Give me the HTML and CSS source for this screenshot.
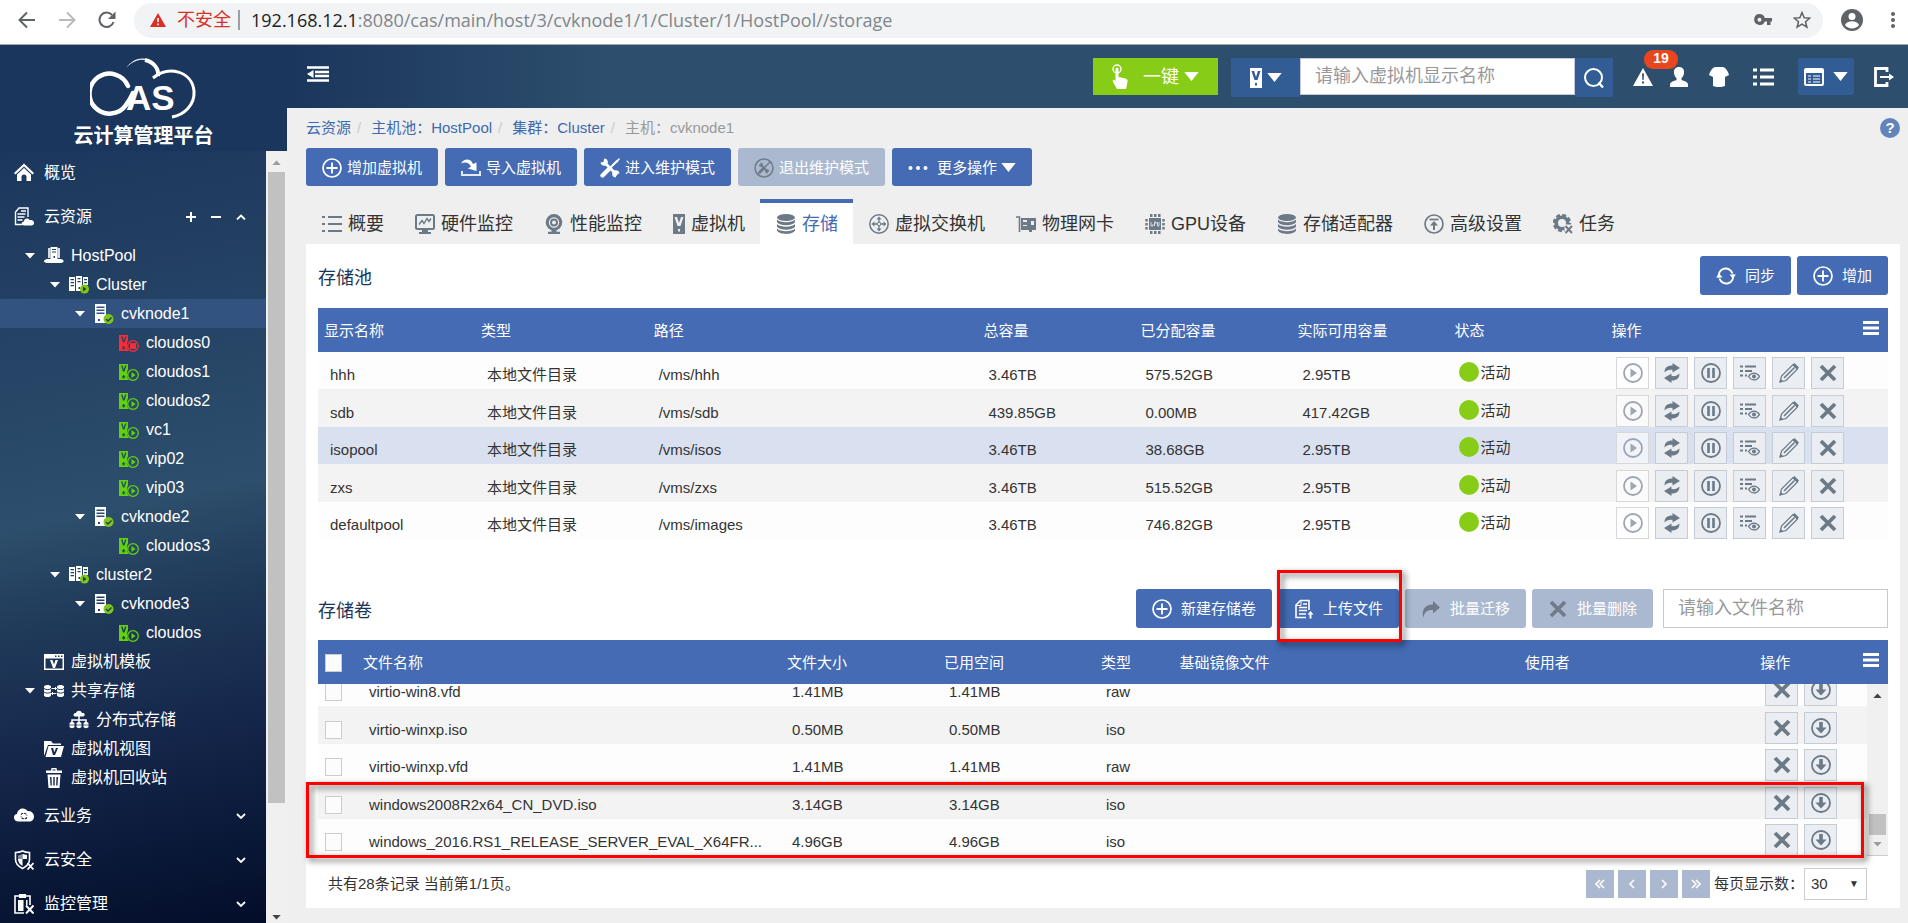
FILE: index.html
```html
<!DOCTYPE html>
<html lang="zh-CN">
<head>
  <meta charset="UTF-8">
  <title>CAS 云计算管理平台</title>
  <link rel="stylesheet" href="styles.css">
</head>
<body>
  <!-- icon sprite -->
  <svg class="sprite" xmlns="http://www.w3.org/2000/svg">
    <symbol id="i-plus" viewBox="0 0 20 20"><circle cx="10" cy="10" r="9" fill="none" stroke="currentColor" stroke-width="1.7"/><path d="M10 4.5v11M4.5 10h11" stroke="currentColor" stroke-width="1.8"/></symbol>
    <symbol id="i-import" viewBox="0 0 20 20"><path d="M1 13v4h18v-4" fill="none" stroke="currentColor" stroke-width="2" opacity=".85"/><path d="M0 5.500C3 0 10 .5 12 6l3.500-1.500V13L7 10.500l3-2C8 4 4 3.500 0 5.500z" fill="currentColor"/></symbol>
    <symbol id="i-tools" viewBox="0 0 20 20"><path d="M4 4l13 13" stroke="currentColor" stroke-width="2.800"/><path d="M17.500 2.500L10 10" stroke="currentColor" stroke-width="2.200"/><path d="M9 11l-6.500 6.500" stroke="currentColor" stroke-width="4.200" stroke-linecap="round"/><path d="M.5 4.500l3-.5.7-3.500c3 .3 4.300 2.500 3.300 5.200L5.700 7.500C3 8.300.8 7 .5 4.500zM19.500 15.500l-3 .5-.7 3.500c-3-.3-4.300-2.500-3.300-5.200l1.800-1.800c2.700-.8 4.900.5 5.200 3z" fill="currentColor"/><path d="M15.500 3.500L19 0l1 1-3 4z" fill="currentColor"/></symbol>
    <symbol id="i-tools-off" viewBox="0 0 20 20"><circle cx="10" cy="10" r="9" fill="none" stroke="currentColor" stroke-width="1.500"/><path d="M6.500 6.500l7.500 7.500" stroke="currentColor" stroke-width="2"/><path d="M9.500 10.500L6 14" stroke="currentColor" stroke-width="3" stroke-linecap="round"/><path d="M4.500 7l1.800-.5.500-2c2 .3 2.500 2 1.500 3.500C7 9 5 8.500 4.500 7zM15.500 13l-1.800.5-.5 2c-2-.3-2.500-2-1.500-3.500 1.300-1 3.300-.5 3.800 1z" fill="currentColor"/><path d="M16.500 3.500L3.500 16.500" stroke="currentColor" stroke-width="1.400"/></symbol>
    <symbol id="i-dots" viewBox="0 0 20 20"><g fill="currentColor"><circle cx="2.500" cy="10" r="2"/><circle cx="10" cy="10" r="2"/><circle cx="17.500" cy="10" r="2"/></g></symbol>
    <symbol id="i-caret" viewBox="0 0 16 10"><path d="M0 0h16L8 10z" fill="currentColor"/></symbol>
    <symbol id="i-list" viewBox="0 0 20 20"><path d="M6 3h14M6 10h14M6 17h14" stroke="currentColor" stroke-width="1.800"/><path d="M0 3h3M0 10h3M0 17h3" stroke="currentColor" stroke-width="1.800"/></symbol>
    <symbol id="i-monitor" viewBox="0 0 20 20"><rect x="1" y="1" width="18" height="14" rx="1.500" fill="none" stroke="currentColor" stroke-width="2"/><path d="M4 10.500l3-4 2 3 3-5 2 3 2-3" fill="none" stroke="currentColor" stroke-width="1.400"/><path d="M7 16h6v2h3v2H4v-2h3z" fill="currentColor"/></symbol>
    <symbol id="i-camera" viewBox="0 0 20 20"><path fill-rule="evenodd" d="M10 0a8.300 8.300 0 1 1 0 16.600A8.300 8.300 0 0 1 10 0zm0 3.300a5.200 5.200 0 1 0 0 10.400 5.200 5.200 0 0 0 0-10.400z" fill="currentColor"/><circle cx="10" cy="8.500" r="3" fill="none" stroke="currentColor" stroke-width="2"/><path d="M7.500 16h5v1.700H16V20H4v-2.300h3.500z" fill="currentColor"/></symbol>
    <symbol id="i-vm" viewBox="0 0 12 20"><path fill-rule="evenodd" d="M0 0h12v20H0zM1.500 3l3 9h3l3-9H8L6 9 4 3zM5 15v2.500h2V15z" fill="currentColor"/></symbol>
    <symbol id="i-disks" viewBox="0 0 20 20"><g fill="currentColor"><ellipse cx="10" cy="3.500" rx="9" ry="3.500"/><path d="M1 5.500C4 9 16 9 19 5.500v2.700c-3 4-15 4-18 0zM1 10c3 3.500 15 3.500 18 0v2.700c-3 4-15 4-18 0zM1 14.500c3 3.500 15 3.500 18 0v2c-2 4.500-16 4.500-18 0z"/></g></symbol>
    <symbol id="i-switch" viewBox="0 0 20 20"><circle cx="10" cy="10" r="9.200" fill="none" stroke="currentColor" stroke-width="1.500"/><path d="M10 2.500l2.500 3h-5zM10 17.500l2.500-3h-5zM2.500 10l3-2.500v5zM17.500 10l-3-2.500v5z" fill="currentColor"/><path d="M10 5v3M10 12v3M5 10h3M12 10h3" stroke="currentColor" stroke-width="1.300"/><circle cx="10" cy="10" r="1.800" fill="none" stroke="currentColor"/></symbol>
    <symbol id="i-nic" viewBox="0 0 20 20"><path d="M0 3h3.500v15" fill="none" stroke="currentColor" stroke-width="1.600"/><path fill-rule="evenodd" d="M5 4h15v12h-4v2h-3v-2H5zM7 6v2h4V6zM15 7v4h3V7zM7 11v1h4v-1z" fill="currentColor"/></symbol>
    <symbol id="i-gpu" viewBox="0 0 20 20"><rect x="4" y="4" width="12" height="12" fill="currentColor"/><path d="M5 1.500h2.500M9 1.500h2.500M13 1.500h2.500M5 18.500h2.500M9 18.500h2.500M13 18.500h2.500" stroke="currentColor" stroke-width="3"/><path d="M1.500 5v2.500M1.500 9v2.500M1.500 13v2.500M18.500 5v2.500M18.500 9v2.500M18.500 13v2.500" stroke="currentColor" stroke-width="2.500"/><path d="M6 8v4h2v-2M9.500 12V8h1.500v2M12.500 8v4H14V8" fill="none" stroke="#efefef" stroke-width=".8"/></symbol>
    <symbol id="i-up" viewBox="0 0 20 20"><circle cx="10" cy="10" r="9" fill="none" stroke="currentColor" stroke-width="1.700"/><path d="M5.500 5.500h9" stroke="currentColor" stroke-width="1.700"/><path d="M10 7l4 4.500h-3V16H9v-4.500H6z" fill="currentColor"/></symbol>
    <symbol id="i-gear" viewBox="0 0 20 20"><circle cx="9" cy="9" r="5.800" fill="none" stroke="currentColor" stroke-width="3.600"/><circle cx="9" cy="9" r="8" fill="none" stroke="currentColor" stroke-width="2.400" stroke-dasharray="4 2.280"/><path d="M11.500 10.500h9v10h-9z" fill="#efefef"/><path d="M12.500 12l6.500 7M19 12l-6.500 7" stroke="currentColor" stroke-width="1.900"/></symbol>
    <symbol id="i-sync" viewBox="0 0 20 20"><path d="M3 11.500a7 7 0 0 1 13.500-4M17 8.500a7 7 0 0 1-13.500 4" fill="none" stroke="currentColor" stroke-width="1.900"/><path d="M13.500 8.500H20L16.700 12.500zM6.500 11.500H0L3.300 7.500z" fill="currentColor"/></symbol>
    <symbol id="i-bars" viewBox="0 0 16 14"><path d="M0 1.500h16M0 7h16M0 12.500h16" stroke="currentColor" stroke-width="3"/></symbol>
    <symbol id="i-play" viewBox="0 0 20 20"><circle cx="10" cy="10" r="9" fill="none" stroke="currentColor" stroke-width="1.800"/><path d="M7.500 5.500L14 10l-6.500 4.500z" fill="currentColor"/></symbol>
    <symbol id="i-refresh" viewBox="0 0 20 20"><path d="M2.500 9.500C2.500 5 5 2.500 10.500 2.500V0L18 5l-7.500 4.500V7C7 6.500 4.500 7.500 2.500 9.500zM17.500 10.500c0 4.500-2.500 7-8 7V20L2 15l7.500-4.500V13c3.500.5 6-.5 8-2.500z" fill="currentColor"/></symbol>
    <symbol id="i-pause" viewBox="0 0 20 20"><circle cx="10" cy="10" r="9" fill="none" stroke="currentColor" stroke-width="1.800"/><path d="M7.500 5v10M12.500 5v10" stroke="currentColor" stroke-width="2.600"/></symbol>
    <symbol id="i-view" viewBox="0 0 20 20"><path d="M0 3.500h3M5 3.500h11M0 8h3M5 8h7M0 12.500h3M5 12.500h2" stroke="currentColor" stroke-width="2"/><path d="M8.500 13.500c3-4.500 8-4.500 11 0-3 4.500-8 4.500-11 0z" fill="none" stroke="currentColor" stroke-width="1.300"/><circle cx="14" cy="13.500" r="2" fill="currentColor"/></symbol>
    <symbol id="i-edit" viewBox="0 0 20 20"><path d="M1 19l1.500-6L14 1.500 18.500 6 7 17.500z" fill="none" stroke="currentColor" stroke-width="1.200"/><path d="M5 15L15.500 4.500" stroke="currentColor" stroke-width="1.600"/><path d="M13.500 2L15.500 0 20 4.500l-2 2zM.5 19.500l1-4 3 3z" fill="currentColor"/></symbol>
    <symbol id="i-x" viewBox="0 0 20 20"><path d="M3 3l14 14M17 3L3 17" stroke="currentColor" stroke-width="3.800"/></symbol>
    <symbol id="i-down" viewBox="0 0 20 20"><circle cx="10" cy="10" r="9" fill="none" stroke="currentColor" stroke-width="1.800"/><path d="M8.200 4h3.600v5.500H15.500L10 15.500 4.500 9.500h3.700z" fill="currentColor"/></symbol>
    <symbol id="i-upload" viewBox="0 0 20 20"><path d="M12 18.500H2V6l4.500-4.500H15V11" fill="none" stroke="currentColor" stroke-width="1.600"/><path d="M2 6.500h5V1.500" fill="none" stroke="currentColor"/><path d="M9 5h4M5 8.500h8M5 11.500h8M5 15h7" stroke="currentColor" stroke-width="1.500"/><path d="M15.500 19.500v-4h-2l3-3.500 3 3.500h-2v4z" fill="currentColor"/></symbol>
    <symbol id="i-forward" viewBox="0 0 20 20"><path d="M12 2l7 6.500-7 6V11C7 10.500 3 12.500 2.500 19 0 11 4 5.500 12 5.500z" fill="currentColor"/></symbol>
    <symbol id="i-home" viewBox="0 0 20 20"><path d="M10 .5L20 10l-1.500 1.500L10 3.500l-8.500 8L0 10z" fill="currentColor"/><path d="M3 11.500l7-6.500 7 6.500V18h-4.500v-4a2.500 2.500 0 0 0-5 0v4H3z" fill="currentColor"/></symbol>
    <symbol id="i-doccloud" viewBox="0 0 20 20"><path d="M8 17.500H1.500V5L5 1h9v9" fill="none" stroke="currentColor" stroke-width="1.400"/><path d="M7 4h5M3.500 7h8M3.500 10h7M3.500 13h5" stroke="currentColor" stroke-width="1.500"/><path d="M10 18.500c-3 0-3-4 0-4 0-3 4-4 5.500-1.500 2.500-.5 4.500.5 4.500 3 0 1.500-1 2.500-2.500 2.500z" fill="currentColor"/></symbol>
    <symbol id="i-pool" viewBox="0 0 20 20"><path d="M4 2h2.500v10H4zM13.500 2H16v10h-2.500z" fill="currentColor" opacity=".8"/><path fill-rule="evenodd" d="M6.500 1h7v13h-7zM8 3v1h4V3zM8 5.500v1h4v-1zM9.500 10v2h1.500v-2z" fill="currentColor"/><path d="M3 13h14c4 1 3 3.500 0 4H3c-4-.5-4-3 0-4z" fill="currentColor"/></symbol>
    <symbol id="i-cluster" viewBox="0 0 20 20"><path fill-rule="evenodd" d="M0 2h6v14H0zM1.500 4v1.200H5V4zM1.500 7v1.200H5V7zM1.500 10v1.200H5V10zM7 1h6v15H7zM8.500 3v1.200h3V3zM8.500 6v1.200h3V6zM9.500 12v2H11v-2zM14 2h5v8h-5zM15 4v1.200h3V4zM15 7v1.200h3V7z" fill="currentColor"/><circle cx="15.500" cy="14" r="4.500" fill="#7fc617"/><path d="M14 11.500l3.500 2.500-3.500 2.500z" fill="#1f3d5c"/></symbol>
    <symbol id="i-host" viewBox="0 0 20 20"><path fill-rule="evenodd" d="M1 0h11v19H1zM2.500 2.500V4h8V2.500zM2.500 5.500V7h8V5.500zM2.500 8.500V10h8V8.500zM4 15v2h2v-2z" fill="currentColor"/><circle cx="14.500" cy="15" r="5" fill="#7fc617"/><path d="M12 15l2 2 3.500-3.500" fill="none" stroke="#1f3d5c" stroke-width="1.400"/></symbol>
    <symbol id="i-vmrun" viewBox="0 0 20 20"><path fill-rule="evenodd" d="M0 2h9v5.500C7.500 9 7.500 16 10 18H0zM2 3.500l2 6h1.500l2-6H6L4.800 7.500 3.500 3.500zM4 13v1.200h-1v1.200h1v1.200h1.300v-1.200h1v-1.200h-1V13z" fill="currentColor"/><circle cx="14" cy="13" r="5.300" fill="none" stroke="currentColor" stroke-width="1.300"/><path d="M12.500 10l4 3-4 3z" fill="currentColor"/></symbol>
    <symbol id="i-vmstop" viewBox="0 0 20 20"><path fill-rule="evenodd" d="M0 2h9v5.500C7.500 9 7.500 16 10 18H0zM2 3.500l2 6h1.500l2-6H6L4.800 7.500 3.500 3.500zM4 13v1.200h-1v1.200h1v1.200h1.300v-1.200h1v-1.200h-1V13z" fill="currentColor"/><circle cx="14" cy="13" r="5.300" fill="none" stroke="currentColor" stroke-width="1.300"/><path d="M11 10h6v6h-6z" fill="currentColor"/></symbol>
    <symbol id="i-template" viewBox="0 0 20 20"><path fill-rule="evenodd" d="M0 2h20v16H0zM1.500 6.500v10h17v-10zM11 3.500V5h1.500V3.500zM14 3.500V5h1.500V3.500zM17 3.500V5h1.500V3.500z" fill="currentColor"/><path d="M6 8h2.500l1.500 4.500L11.500 8H14l-3 8H9z" fill="currentColor"/></symbol>
    <symbol id="i-share" viewBox="0 0 20 20"><path d="M0 5.500c1-2 6-2 7 0v9c-1 2-6 2-7 0zM13 5.500c1-2 6-2 7 0v9c-1 2-6 2-7 0z" fill="currentColor"/><path d="M0 7.500c2 1.500 5 1.500 7 0M0 11c2 1.500 5 1.500 7 0M13 7.500c2 1.500 5 1.500 7 0M13 11c2 1.500 5 1.500 7 0" fill="none" stroke="#1b3150"/><path d="M7.500 7.500h5M7.500 12.500h5M11 6l1.500 1.500L11 9M9 11l-1.500 1.500L9 14" fill="none" stroke="currentColor"/></symbol>
    <symbol id="i-dist" viewBox="0 0 20 20"><path d="M6 6.500c-3-1-1-4 1-3.500 1-3 5-3 6 0 3-.5 4 2.500 1 3.500z" fill="currentColor"/><path d="M10 6v6M3 12.500V10h14v2.500" fill="none" stroke="currentColor" stroke-width="1.500"/><path d="M.5 13c1-1.500 4-1.500 5 0v4c-1 1.500-4 1.500-5 0zM7.500 13c1-1.500 4-1.500 5 0v4c-1 1.500-4 1.500-5 0zM14.500 13c1-1.500 4-1.500 5 0v4c-1 1.500-4 1.500-5 0z" fill="currentColor"/><path d="M0 15h20" stroke="#1b3150" stroke-width=".7"/></symbol>
    <symbol id="i-folder" viewBox="0 0 20 20"><path d="M0 17V2h7l2 2.500h8V6H4z" fill="currentColor"/><path fill-rule="evenodd" d="M4.500 7H20l-3 11H1.500zM7 9l2 7h2l3-7h-2l-1.800 4.500L9.200 9z" fill="currentColor"/></symbol>
    <symbol id="i-trash" viewBox="0 0 20 20"><path fill-rule="evenodd" d="M2 2.500h5L7.500 0h5l.5 2.500h5V5H2zM8.500 1.500v1h3v-1zM3.500 6.500h13L15.500 20h-11zM6 9l.5 8.500h1.300L7.500 9zM9.300 9v8.500h1.400V9zM12.500 9l-.3 8.500h1.300L14 9z" fill="currentColor"/></symbol>
    <symbol id="i-cloudsvc" viewBox="0 0 20 20"><path d="M4.500 15.500C-1 15.500-1.500 8.500 3 8 3.500 2 11 .5 13.500 5 18 4.500 20 8 20 10.500c0 3-2 5-5 5z" fill="currentColor"/><path d="M7 8.500a3.500 3.500 0 0 1 6 1M13 11.500a3.500 3.500 0 0 1-6-1" fill="none" stroke="#12223f" stroke-width="1.200" stroke-dasharray="2.500 .8"/></symbol>
    <symbol id="i-shield" viewBox="0 0 20 20"><path d="M8.500 1c2 1 5 1.500 7 1.500v7c0 4-3 7-7 9-4-2-7-5-7-9v-7c2 0 5-.5 7-1.500z" fill="none" stroke="currentColor" stroke-width="1.600"/><path d="M8.500 4v5H13V5zM8.500 9v7C5.500 14 4 12 4 9z" fill="currentColor"/><path d="M4 5.500l4.500-1.500v5H4z" fill="currentColor" opacity=".5"/><path d="M13.500 13l6 6.500M19.500 13l-6 6.500" stroke="currentColor" stroke-width="1.800"/></symbol>
    <symbol id="i-clip" viewBox="0 0 20 20"><path d="M10 19H1V2h15v9" fill="none" stroke="currentColor" stroke-width="1.600"/><path d="M5 0h7v4H5zM4 6h5.500v11H4zM12 6h1.500v5H12z" fill="currentColor"/><path d="M12 11.500l7.500 8M19.500 11.500l-7.500 8" stroke="currentColor" stroke-width="2"/></symbol>
    <symbol id="i-tri" viewBox="0 0 10 6"><path d="M0 0h10L5 5.500z" fill="currentColor"/></symbol>
    <symbol id="i-chev" viewBox="0 0 10 6"><path d="M1 1l4 4 4-4" fill="none" stroke="currentColor" stroke-width="1.800"/></symbol>
    <symbol id="i-chevup" viewBox="0 0 10 6"><path d="M1 5.500l4-4 4 4" fill="none" stroke="currentColor" stroke-width="1.800"/></symbol>
  </svg>

  <!-- browser address bar -->
  <div class="browser">
    <div class="nav-buttons">
      <svg width="20" height="20" viewBox="0 0 20 20"><path d="M18 10H3M10 2.500L2.500 10l7.500 7.500" fill="none" stroke="#5f6368" stroke-width="2"/></svg>
      <svg width="20" height="20" viewBox="0 0 20 20"><path d="M2 10h15M10 2.500l7.500 7.500-7.500 7.500" fill="none" stroke="#bbb" stroke-width="2"/></svg>
      <svg width="20" height="20" viewBox="0 0 20 20"><path d="M16.500 12A7.200 7.200 0 1 1 15 5" fill="none" stroke="#5f6368" stroke-width="2"/><path d="M18.500 1.500v7.500H11z" fill="#5f6368"/></svg>
    </div>
    <div class="omnibox">
      <svg width="16" height="14" viewBox="0 0 16 14"><path d="M8 0l8 14H0z" fill="#d93025"/><path d="M8 5v4M8 10.500v1.800" stroke="#fff" stroke-width="1.600"/></svg>
      <span class="insecure">不安全</span>
      <span class="url"><b>192.168.12.1</b>:8080/cas/main/host/3/cvknode1/1/Cluster/1/HostPool//storage</span>
      <svg width="18" height="12" viewBox="0 0 18 12"><path fill-rule="evenodd" d="M5.500 0a5.500 5.500 0 0 1 5.300 4H18v3.500h-1.500V11H13V7.500h-2.200A5.500 5.500 0 1 1 5.500 0zm0 3.700a2 2 0 1 0 0 4 2 2 0 0 0 0-4z" fill="#5f6368"/></svg>
      <svg width="18" height="18" viewBox="0 0 18 18"><path d="M9 1.500l2.200 5.200 5.600.4-4.300 3.600 1.400 5.500L9 13.200l-4.900 3 1.400-5.500L1.200 7.100l5.600-.4z" fill="none" stroke="#5f6368" stroke-width="1.500"/></svg>
    </div>
    <svg width="22" height="22" viewBox="0 0 22 22"><circle cx="11" cy="11" r="11" fill="#5f6368"/><circle cx="11" cy="7.500" r="3.500" fill="#fff"/><path d="M4 16c2-5 12-5 14 0-3 4.500-11 4.500-14 0z" fill="#fff"/></svg>
    <svg width="4" height="16" viewBox="0 0 4 16"><g fill="#5f6368"><circle cx="2" cy="2" r="2"/><circle cx="2" cy="8" r="2"/><circle cx="2" cy="14" r="2"/></g></svg>
  </div>

  <div class="app">
    <aside class="side">
      <div class="logo">
        <svg width="108" height="62" viewBox="0 0 108 62" fill="none" stroke="#fff">
          <path d="M38 29A20 20 0 1 0 36 48q4-5 7-12" stroke-width="4.500" stroke-linecap="round"/>
          <path d="M36 11C48-5 66 0 72 20c-4-14-20-26-36-9z" fill="#fff" stroke="none"/>
          <path d="M55 3c9 2 14 9 13 16" stroke-width="4"/>
          <path d="M63 21C78 8 102 14 104 34c1 14-10 24-22 26" stroke-width="3"/>
          <text x="36" y="53" class="logo-as">AS</text>
        </svg>
        <span>云计算管理平台</span>
      </div>
      <div class="side-body">
        <nav class="menu">
          <a href="#" class="section"><svg class="icon"><use href="#i-home"/></svg>概览</a>
          <a href="#" class="section"><svg class="icon"><use href="#i-doccloud"/></svg>云资源
            <span class="tools"><i class="pm plus"></i><i class="pm"></i><svg class="tri"><use href="#i-chevup"/></svg></span>
          </a>
          <ul class="tree">
            <li class="l1"><a href="#"><svg class="tri"><use href="#i-tri"/></svg><svg class="icon"><use href="#i-pool"/></svg>HostPool</a></li>
            <li class="l2"><a href="#"><svg class="tri"><use href="#i-tri"/></svg><svg class="icon"><use href="#i-cluster"/></svg>Cluster</a></li>
            <li class="l3 current"><a href="#"><svg class="tri"><use href="#i-tri"/></svg><svg class="icon"><use href="#i-host"/></svg>cvknode1</a></li>
            <li class="l4"><a href="#"><svg class="icon stopped"><use href="#i-vmstop"/></svg>cloudos0</a></li>
            <li class="l4"><a href="#"><svg class="icon running"><use href="#i-vmrun"/></svg>cloudos1</a></li>
            <li class="l4"><a href="#"><svg class="icon running"><use href="#i-vmrun"/></svg>cloudos2</a></li>
            <li class="l4"><a href="#"><svg class="icon running"><use href="#i-vmrun"/></svg>vc1</a></li>
            <li class="l4"><a href="#"><svg class="icon running"><use href="#i-vmrun"/></svg>vip02</a></li>
            <li class="l4"><a href="#"><svg class="icon running"><use href="#i-vmrun"/></svg>vip03</a></li>
            <li class="l3"><a href="#"><svg class="tri"><use href="#i-tri"/></svg><svg class="icon"><use href="#i-host"/></svg>cvknode2</a></li>
            <li class="l4"><a href="#"><svg class="icon running"><use href="#i-vmrun"/></svg>cloudos3</a></li>
            <li class="l2"><a href="#"><svg class="tri"><use href="#i-tri"/></svg><svg class="icon"><use href="#i-cluster"/></svg>cluster2</a></li>
            <li class="l3"><a href="#"><svg class="tri"><use href="#i-tri"/></svg><svg class="icon"><use href="#i-host"/></svg>cvknode3</a></li>
            <li class="l4"><a href="#"><svg class="icon running"><use href="#i-vmrun"/></svg>cloudos</a></li>
            <li class="l1 leaf"><a href="#"><svg class="icon"><use href="#i-template"/></svg>虚拟机模板</a></li>
            <li class="l1"><a href="#"><svg class="tri"><use href="#i-tri"/></svg><svg class="icon"><use href="#i-share"/></svg>共享存储</a></li>
            <li class="l2 leaf"><a href="#"><svg class="icon"><use href="#i-dist"/></svg>分布式存储</a></li>
            <li class="l1 leaf"><a href="#"><svg class="icon"><use href="#i-folder"/></svg>虚拟机视图</a></li>
            <li class="l1 leaf"><a href="#"><svg class="icon"><use href="#i-trash"/></svg>虚拟机回收站</a></li>
          </ul>
          <a href="#" class="section"><svg class="icon"><use href="#i-cloudsvc"/></svg>云业务<span class="tools"><svg class="tri"><use href="#i-chev"/></svg></span></a>
          <a href="#" class="section"><svg class="icon"><use href="#i-shield"/></svg>云安全<span class="tools"><svg class="tri"><use href="#i-chev"/></svg></span></a>
          <a href="#" class="section"><svg class="icon"><use href="#i-clip"/></svg>监控管理<span class="tools"><svg class="tri"><use href="#i-chev"/></svg></span></a>
        </nav>
        <div class="scrollbar side-scroll">
          <svg class="arrow up dim"><use href="#i-tri"/></svg>
          <div class="thumb"></div>
          <svg class="arrow"><use href="#i-tri"/></svg>
        </div>
      </div>
    </aside>

    <div class="page">
      <header class="topbar">
        <button type="button" class="collapse" aria-label="收起菜单">
          <svg width="22" height="16" viewBox="0 0 22 16"><path d="M0 1.500h22M8 6h14M8 10h14M0 14.500h22" stroke="#fff" stroke-width="2.600"/><path d="M6.500 4v8L0 8z" fill="#fff"/></svg>
        </button>
        <button type="button" class="onekey">
          <svg width="16" height="26" viewBox="0 0 16 26"><circle cx="5" cy="5" r="4" fill="none" stroke="#fff" stroke-width="1.400"/><path d="M3.500 5a1.500 1.500 0 0 1 3 0v8l7 1.500c1.500.5 2.500 1.500 2 3.500L14 25H5l-4-7c-1-2.500 1-3 2.500-1z" fill="#fff"/></svg>
          一键<svg class="caret"><use href="#i-caret"/></svg>
        </button>
        <div class="search">
          <button type="button" class="kind" aria-label="类型"><svg width="12" height="20"><use href="#i-vm"/></svg><svg class="caret"><use href="#i-caret"/></svg></button>
          <input type="text" placeholder="请输入虚拟机显示名称" aria-label="虚拟机显示名称">
          <button type="button" class="go" aria-label="搜索"><svg width="20" height="20" viewBox="0 0 20 20"><circle cx="9.500" cy="9.500" r="8.500" fill="none" stroke="#fff" stroke-width="2"/><path d="M14.500 14.500l4.500 5" stroke="#fff" stroke-width="2.400"/></svg></button>
        </div>
        <div class="quick">
          <a href="#" class="alarm" aria-label="告警">
            <svg width="20" height="18" viewBox="0 0 20 18"><path fill-rule="evenodd" d="M10 0l10 18H0zM9 5.500l.4 6.500h1.200l.4-6.500zM9 13.500v2h2v-2z" fill="#fff"/></svg>
            <span class="badge">19</span>
          </a>
          <a href="#" aria-label="用户"><svg width="20" height="20" viewBox="0 0 20 20"><path d="M10 0c3.500 0 5.500 2.500 5 6-.3 2.500-1.200 4-2.500 5v2c3 1 6.500 2 6.500 4.500V20H1v-2.500C1 15 4.500 14 7.500 13v-2C6.200 10 5.300 8.500 5 6c-.5-3.500 1.500-6 5-6z" fill="#fff"/></svg></a>
          <a href="#" aria-label="皮肤"><svg width="20" height="20" viewBox="0 0 20 20"><path d="M6 0h8c3 1 5 4 6 8l-4 2v9c-3 1.500-9 1.500-12 0v-9L0 8c1-4 3-7 6-8z" fill="#fff"/></svg></a>
          <a href="#" aria-label="列表"><svg width="21" height="18" viewBox="0 0 21 18"><path d="M0 2h4M7 2h14M0 9h4M7 9h14M0 16h4M7 16h14" stroke="#fff" stroke-width="3"/></svg></a>
          <button type="button" class="panel-menu" aria-label="面板">
            <svg width="20" height="18" viewBox="0 0 20 18"><rect x="1" y="1" width="18" height="16" rx="1" fill="none" stroke="#fff" stroke-width="2"/><path d="M0 2h20v3H0z" fill="#fff"/><path d="M4 8h3M9 8h7M4 11h3M9 11h7M4 14h3M9 14h7" stroke="#fff" stroke-width="1.200"/></svg>
            <svg class="caret"><use href="#i-caret"/></svg>
          </button>
          <a href="#" aria-label="退出"><svg width="20" height="20" viewBox="0 0 20 20"><path d="M13 5V1.500H1.500v17H13V15" fill="none" stroke="#fff" stroke-width="2.800"/><path d="M6 9h9V6.500l5 3.500-5 3.500V11H6z" fill="#fff"/></svg></a>
        </div>
      </header>

      <main class="content">
        <div class="crumbs">
          <ol>
            <li><a href="#">云资源</a></li>
            <li><a href="#">主机池：HostPool</a></li>
            <li><a href="#">集群：Cluster</a></li>
            <li>主机：cvknode1</li>
          </ol>
          <a href="#" class="help">?</a>
        </div>

        <div class="toolbar">
          <button type="button" class="btn"><svg class="icon"><use href="#i-plus"/></svg>增加虚拟机</button>
          <button type="button" class="btn"><svg class="icon"><use href="#i-import"/></svg>导入虚拟机</button>
          <button type="button" class="btn"><svg class="icon"><use href="#i-tools"/></svg>进入维护模式</button>
          <button type="button" class="btn" disabled><svg class="icon"><use href="#i-tools-off"/></svg>退出维护模式</button>
          <button type="button" class="btn more"><svg class="icon"><use href="#i-dots"/></svg><span>更多操作<svg class="caret"><use href="#i-caret"/></svg></span></button>
        </div>

        <nav class="tabs">
          <a href="#"><svg class="icon"><use href="#i-list"/></svg>概要</a>
          <a href="#"><svg class="icon"><use href="#i-monitor"/></svg>硬件监控</a>
          <a href="#"><svg class="icon"><use href="#i-camera"/></svg>性能监控</a>
          <a href="#"><svg class="icon slim"><use href="#i-vm"/></svg>虚拟机</a>
          <a href="#" class="active"><svg class="icon"><use href="#i-disks"/></svg>存储</a>
          <a href="#"><svg class="icon"><use href="#i-switch"/></svg>虚拟交换机</a>
          <a href="#"><svg class="icon"><use href="#i-nic"/></svg>物理网卡</a>
          <a href="#"><svg class="icon"><use href="#i-gpu"/></svg>GPU设备</a>
          <a href="#"><svg class="icon"><use href="#i-disks"/></svg>存储适配器</a>
          <a href="#"><svg class="icon"><use href="#i-up"/></svg>高级设置</a>
          <a href="#"><svg class="icon"><use href="#i-gear"/></svg>任务</a>
        </nav>

        <div class="panel">
          <div class="head">
            <h2>存储池</h2>
            <button type="button" class="btn wide"><svg class="icon"><use href="#i-sync"/></svg>同步</button>
            <button type="button" class="btn wide"><svg class="icon"><use href="#i-plus"/></svg>增加</button>
          </div>
          <table class="grid pools">
            <colgroup><col class="c10"><col class="c11"><col class="c21"><col class="c10"><col class="c10"><col class="c10"><col class="c10"><col></colgroup>
            <thead>
              <tr><th>显示名称</th><th>类型</th><th>路径</th><th>总容量</th><th>已分配容量</th><th>实际可用容量</th><th>状态</th><th>操作<svg class="bars"><use href="#i-bars"/></svg></th></tr>
            </thead>
            <tbody>
              <tr>
                <td>hhh</td><td>本地文件目录</td><td>/vms/hhh</td><td>3.46TB</td><td>575.52GB</td><td>2.95TB</td><td class="state">活动</td>
                <td class="ops"><div><button type="button" disabled><svg class="icon"><use href="#i-play"/></svg></button><button type="button"><svg class="icon"><use href="#i-refresh"/></svg></button><button type="button"><svg class="icon"><use href="#i-pause"/></svg></button><button type="button"><svg class="icon"><use href="#i-view"/></svg></button><button type="button"><svg class="icon"><use href="#i-edit"/></svg></button><button type="button"><svg class="icon"><use href="#i-x"/></svg></button></div></td>
              </tr>
              <tr>
                <td>sdb</td><td>本地文件目录</td><td>/vms/sdb</td><td>439.85GB</td><td>0.00MB</td><td>417.42GB</td><td class="state">活动</td>
                <td class="ops"><div><button type="button" disabled><svg class="icon"><use href="#i-play"/></svg></button><button type="button"><svg class="icon"><use href="#i-refresh"/></svg></button><button type="button"><svg class="icon"><use href="#i-pause"/></svg></button><button type="button"><svg class="icon"><use href="#i-view"/></svg></button><button type="button"><svg class="icon"><use href="#i-edit"/></svg></button><button type="button"><svg class="icon"><use href="#i-x"/></svg></button></div></td>
              </tr>
              <tr class="selected">
                <td>isopool</td><td>本地文件目录</td><td>/vms/isos</td><td>3.46TB</td><td>38.68GB</td><td>2.95TB</td><td class="state">活动</td>
                <td class="ops"><div><button type="button" disabled><svg class="icon"><use href="#i-play"/></svg></button><button type="button"><svg class="icon"><use href="#i-refresh"/></svg></button><button type="button"><svg class="icon"><use href="#i-pause"/></svg></button><button type="button"><svg class="icon"><use href="#i-view"/></svg></button><button type="button"><svg class="icon"><use href="#i-edit"/></svg></button><button type="button"><svg class="icon"><use href="#i-x"/></svg></button></div></td>
              </tr>
              <tr>
                <td>zxs</td><td>本地文件目录</td><td>/vms/zxs</td><td>3.46TB</td><td>515.52GB</td><td>2.95TB</td><td class="state">活动</td>
                <td class="ops"><div><button type="button" disabled><svg class="icon"><use href="#i-play"/></svg></button><button type="button"><svg class="icon"><use href="#i-refresh"/></svg></button><button type="button"><svg class="icon"><use href="#i-pause"/></svg></button><button type="button"><svg class="icon"><use href="#i-view"/></svg></button><button type="button"><svg class="icon"><use href="#i-edit"/></svg></button><button type="button"><svg class="icon"><use href="#i-x"/></svg></button></div></td>
              </tr>
              <tr>
                <td>defaultpool</td><td>本地文件目录</td><td>/vms/images</td><td>3.46TB</td><td>746.82GB</td><td>2.95TB</td><td class="state">活动</td>
                <td class="ops"><div><button type="button" disabled><svg class="icon"><use href="#i-play"/></svg></button><button type="button"><svg class="icon"><use href="#i-refresh"/></svg></button><button type="button"><svg class="icon"><use href="#i-pause"/></svg></button><button type="button"><svg class="icon"><use href="#i-view"/></svg></button><button type="button"><svg class="icon"><use href="#i-edit"/></svg></button><button type="button"><svg class="icon"><use href="#i-x"/></svg></button></div></td>
              </tr>
            </tbody>
          </table>

          <div class="head volumes-head">
            <h2>存储卷</h2>
            <button type="button" class="btn wide"><svg class="icon"><use href="#i-plus"/></svg>新建存储卷</button>
            <span class="marked"><button type="button" class="btn wide"><svg class="icon"><use href="#i-upload"/></svg>上传文件</button></span>
            <button type="button" class="btn wide" disabled><svg class="icon"><use href="#i-forward"/></svg>批量迁移</button>
            <button type="button" class="btn wide" disabled><svg class="icon"><use href="#i-x"/></svg>批量删除</button>
            <input type="text" placeholder="请输入文件名称" aria-label="文件名称">
          </div>
          <table class="grid files">
            <colgroup><col class="cbox"><col class="c27"><col class="c10"><col class="c10"><col class="c5"><col class="c22"><col class="c15"><col></colgroup>
            <thead>
              <tr><th><input type="checkbox" aria-label="全选"></th><th>文件名称</th><th>文件大小</th><th>已用空间</th><th>类型</th><th>基础镜像文件</th><th>使用者</th><th>操作<svg class="bars"><use href="#i-bars"/></svg></th></tr>
            </thead>
          </table>
          <div class="files-area">
            <div class="files-body">
              <table class="grid files">
                <colgroup><col class="cbox"><col class="c27"><col class="c10"><col class="c10"><col class="c5"><col class="c22"><col class="c15"><col></colgroup>
                <tbody>
                  <tr><td><input type="checkbox" aria-label="virtio-win8.vfd"></td><td>virtio-win8.vfd</td><td>1.41MB</td><td>1.41MB</td><td>raw</td><td></td><td></td><td class="ops"><div><button type="button"><svg class="icon"><use href="#i-x"/></svg></button><button type="button"><svg class="icon"><use href="#i-down"/></svg></button></div></td></tr>
                  <tr><td><input type="checkbox" aria-label="virtio-winxp.iso"></td><td>virtio-winxp.iso</td><td>0.50MB</td><td>0.50MB</td><td>iso</td><td></td><td></td><td class="ops"><div><button type="button"><svg class="icon"><use href="#i-x"/></svg></button><button type="button"><svg class="icon"><use href="#i-down"/></svg></button></div></td></tr>
                  <tr><td><input type="checkbox" aria-label="virtio-winxp.vfd"></td><td>virtio-winxp.vfd</td><td>1.41MB</td><td>1.41MB</td><td>raw</td><td></td><td></td><td class="ops"><div><button type="button"><svg class="icon"><use href="#i-x"/></svg></button><button type="button"><svg class="icon"><use href="#i-down"/></svg></button></div></td></tr>
                  <tr><td><input type="checkbox" aria-label="windows2008R2x64_CN_DVD.iso"></td><td>windows2008R2x64_CN_DVD.iso</td><td>3.14GB</td><td>3.14GB</td><td>iso</td><td></td><td></td><td class="ops"><div><button type="button"><svg class="icon"><use href="#i-x"/></svg></button><button type="button"><svg class="icon"><use href="#i-down"/></svg></button></div></td></tr>
                  <tr><td><input type="checkbox" aria-label="windows_2016"></td><td>windows_2016.RS1_RELEASE_SERVER_EVAL_X64FR...</td><td>4.96GB</td><td>4.96GB</td><td>iso</td><td></td><td></td><td class="ops"><div><button type="button"><svg class="icon"><use href="#i-x"/></svg></button><button type="button"><svg class="icon"><use href="#i-down"/></svg></button></div></td></tr>
                </tbody>
              </table>
            </div>
            <div class="scrollbar files-scroll">
              <svg class="arrow up"><use href="#i-tri"/></svg>
              <div class="thumb"></div>
              <svg class="arrow dim"><use href="#i-tri"/></svg>
            </div>
            <div class="mark"></div>
          </div>

          <div class="pager">
            <span class="total">共有28条记录 当前第1/1页。</span>
            <button type="button" aria-label="首页"><svg width="10" height="10" viewBox="0 0 10 10"><path d="M5 1L1 5l4 4M9 1L5 5l4 4" fill="none" stroke="#fff" stroke-width="1.600"/></svg></button>
            <button type="button" aria-label="上一页"><svg width="10" height="10" viewBox="0 0 10 10"><path d="M7 1L3 5l4 4" fill="none" stroke="#fff" stroke-width="1.600"/></svg></button>
            <button type="button" aria-label="下一页"><svg width="10" height="10" viewBox="0 0 10 10"><path d="M3 1l4 4-4 4" fill="none" stroke="#fff" stroke-width="1.600"/></svg></button>
            <button type="button" aria-label="末页"><svg width="10" height="10" viewBox="0 0 10 10"><path d="M1 1l4 4-4 4M5 1l4 4-4 4" fill="none" stroke="#fff" stroke-width="1.600"/></svg></button>
            <div class="size">
              <label for="page-size">每页显示数：</label>
              <span class="select"><select id="page-size"><option>30</option><option>50</option><option>100</option></select></span>
            </div>
          </div>
        </div>
      </main>
    </div>
  </div>
</body>
</html>
```
FILE: styles.css
```css
* {
  box-sizing: border-box;
}
body {
  margin: 0;
  height: 100vh;
  display: flex;
  flex-direction: column;
  overflow: hidden;
  background: #efefef;
  color: #333;
  font: 15px/20px "Liberation Sans", "Noto Sans CJK SC", sans-serif;
}
a {
  color: inherit;
  text-decoration: none;
}
button, input, select {
  font: inherit;
  margin: 0;
}
button {
  border: 0;
  padding: 0;
  cursor: pointer;
}
svg {
  display: block;
  flex: none;
}
.sprite {
  position: absolute;
  width: 0;
  height: 0;
}
.icon {
  width: 20px;
  height: 20px;
}
.caret {
  width: 15px;
  height: 9px;
}

/* browser bar */
.browser {
  flex: none;
  display: flex;
  align-items: center;
  height: 45px;
  padding: 0 13px 4px 17px;
  background: #fff;
  border-bottom: 1px solid #a8a8a8;
}
.nav-buttons {
  display: flex;
  gap: 20px;
  width: 117px;
}
.omnibox {
  flex: 1;
  display: flex;
  align-items: center;
  height: 35px;
  margin-right: 18px;
  padding: 0 12px 0 16px;
  gap: 21px;
  border-radius: 18px;
  background: #f1f3f4;
}
.browser > svg:last-child {
  margin-left: 28px;
}
.insecure {
  margin-left: -10px;
  padding-right: 7px;
  border-right: 2px solid #9aa0a6;
  color: #d93025;
  font-size: 18px;
}
.url {
  flex: 1;
  margin-left: -10px;
  color: #80868b;
  font: 18px/24px "Open Sans", sans-serif;
}
.url b {
  color: #202124;
  font-weight: normal;
}

/* left side */
.app {
  flex: 1;
  display: flex;
  min-height: 0;
}
.side {
  flex: none;
  display: flex;
  flex-direction: column;
  width: 287px;
  color: #fff;
  font-size: 16px;
}
.logo {
  flex: none;
  display: flex;
  flex-direction: column;
  align-items: center;
  height: 106px;
  padding-top: 12px;
  background: #1b365c;
  font-size: 20px;
  line-height: 34px;
  font-weight: bold;
}
.logo-as {
  fill: #fff;
  stroke: none;
  font: bold 35px "Liberation Sans", sans-serif;
}
.side-body {
  flex: 1;
  display: flex;
  min-height: 0;
}
.menu {
  flex: 1;
  overflow: hidden;
  background: linear-gradient(168deg, #1c375d 0%, #2d4e6c 46%, #203a5a 58%, #14264a 75%, #020d29 100%);
}
.section {
  display: flex;
  align-items: center;
  height: 44px;
  padding: 0 20px 0 14px;
}
.section .icon {
  margin-right: 10px;
}
.tools {
  display: flex;
  align-items: center;
  gap: 15px;
  margin-left: auto;
}
.tri {
  width: 10px;
  height: 6px;
}
.pm {
  position: relative;
  width: 10px;
  height: 2px;
  background: #fff;
}
.plus::after {
  content: "";
  position: absolute;
  left: 4px;
  top: -4px;
  width: 2px;
  height: 10px;
  background: #fff;
}
.tree {
  margin: 0;
  padding: 2px 0;
  list-style: none;
}
.tree a {
  display: flex;
  align-items: center;
  height: 29px;
}
.tree .icon {
  margin-right: 7px;
}
.tree .tri {
  margin-right: 9px;
}
.l1 { padding-left: 25px; }
.l2 { padding-left: 50px; }
.l3 { padding-left: 75px; }
.l4 { padding-left: 119px; }
.l1.leaf { padding-left: 44px; }
.l2.leaf { padding-left: 69px; }
.current {
  background: #32527f;
}
.running {
  color: #62d20e;
}
.stopped {
  color: #fb2b38;
}
.scrollbar {
  display: flex;
  flex-direction: column;
  align-items: center;
  background: #f0f0f0;
  color: #444;
}
.scrollbar .thumb {
  width: 17px;
  background: #c1c1c1;
}
.arrow {
  width: 9px;
  height: 5px;
}
.up {
  transform: rotate(180deg);
}
.dim {
  color: #9c9c9c;
}
.side-scroll {
  width: 21px;
  padding: 9px 0 3px;
}
.side-scroll .thumb {
  flex: 1;
  margin: 7px 0 112px;
}

/* top bar */
.page {
  flex: 1;
  display: flex;
  flex-direction: column;
  min-width: 0;
}
.topbar {
  flex: none;
  display: flex;
  align-items: flex-start;
  height: 63px;
  padding: 13px 14px 0 20px;
  background: linear-gradient(90deg, #1b365c, #2d4e6d 320px);
  color: #fff;
  font-size: 18px;
}
.topbar button {
  display: flex;
  align-items: center;
  justify-content: center;
  color: #fff;
}
.topbar .collapse {
  margin: 8px auto 0 0;
  background: none;
}
.topbar .onekey {
  width: 125px;
  height: 37px;
  margin-right: 13px;
  gap: 5px;
  background: #87cd17;
}
.onekey svg:first-child {
  margin-right: 10px;
}
.search {
  display: flex;
}
.search .kind, .search .go {
  height: 39px;
  background: #315d94;
}
.search .kind {
  width: 69px;
  gap: 5px;
}
.search .go {
  width: 38px;
}
.search input {
  width: 275px;
  height: 37px;
}
input[type="text"] {
  padding: 0 14px;
  border: 1px solid #c5c8d8;
  border-radius: 0;
  background: #fff;
  font-size: 18px;
}
input::placeholder {
  color: #999;
}
.quick {
  display: flex;
  align-items: center;
  height: 37px;
  margin-left: 20px;
  gap: 20px;
}
.quick a:first-child {
  margin-right: -4px;
}
.quick a:nth-child(4) {
  margin: 0 4px;
}
.alarm {
  position: relative;
}
.badge {
  position: absolute;
  left: 11px;
  top: -18px;
  width: 34px;
  height: 19px;
  border-radius: 9px;
  background: #e8461e;
  font: bold 14px/17px "Liberation Sans", sans-serif;
  text-align: center;
}
.quick .panel-menu {
  width: 56px;
  height: 37px;
  gap: 9px;
  border-radius: 3px;
  background: #315d94;
}

/* content */
.content {
  padding: 0 8px 14px 19px;
}
.crumbs {
  display: flex;
  align-items: center;
  height: 40px;
  color: #999;
}
.crumbs ol {
  display: flex;
  margin: 0 auto 0 0;
  padding: 0;
  list-style: none;
}
.crumbs li + li::before {
  content: "/";
  padding: 0 10px 0 6px;
  color: #ccc;
}
.crumbs li a {
  color: #4069b0;
}
.help {
  width: 20px;
  height: 20px;
  border-radius: 50%;
  background: #6384b8;
  color: #fff;
  font-weight: bold;
  text-align: center;
}
.toolbar {
  display: flex;
  gap: 7px;
}
.btn {
  display: flex;
  align-items: center;
  height: 38px;
  padding: 1px 16px 0;
  gap: 5px;
  border-radius: 3px;
  background: #446bb3;
  color: #fff;
  white-space: nowrap;
}
.btn:disabled {
  background: #abb9d0;
}
.btn:disabled .icon {
  color: #6f7b89;
}
.btn.wide {
  height: 39px;
  gap: 9px;
}
.btn.more {
  gap: 9px;
}
.more span {
  display: flex;
  align-items: center;
  gap: 4px;
}
.tabs {
  display: flex;
  margin-top: 13px;
  font-size: 18px;
}
.tabs a {
  display: flex;
  align-items: center;
  height: 45px;
  padding: 1px 15px 0 16px;
  gap: 6px;
  border-top: 4px solid transparent;
}
.tabs .icon {
  color: #6c7986;
}
.tabs .slim {
  width: 12px;
}
.tabs .active {
  border-top-color: #446bb3;
  background: #fff;
  color: #446bb3;
}
.panel {
  padding: 12px 12px 8px;
  background: #fff;
}
.head {
  display: flex;
  align-items: center;
  gap: 6px;
  margin-bottom: 13px;
}
.head h2 {
  margin: 0 auto 0 0;
  padding-top: 4px;
  color: #1b365c;
  font-size: 18px;
  font-weight: normal;
}
.head input {
  width: 225px;
  height: 39px;
  margin-left: 4px;
}
.volumes-head {
  margin-top: 50px;
  margin-bottom: 12px;
}
.marked {
  position: relative;
}
.marked::after, .mark {
  content: "";
  position: absolute;
  border: 3px solid #f00;
  filter: drop-shadow(3px 3px 3px rgba(0,0,0,0.6));
  pointer-events: none;
}
.marked::after {
  inset: -19px -3px -14px -1px;
}
.mark {
  inset: 98px 24px -2px -12px;
}

/* tables */
.grid {
  width: 100%;
  table-layout: fixed;
  border-collapse: collapse;
}
.c5 { width: 5%; }
.c10 { width: 10%; }
.c11 { width: 11%; }
.c15 { width: 15%; }
.c21 { width: 21%; }
.c22 { width: 22%; }
.c27 { width: 27%; }
.cbox { width: 39px; }
.grid th {
  height: 44px;
  padding: 1px 6px 0;
  background: #446bb3;
  color: #fff;
  font-weight: normal;
  text-align: left;
}
.grid td {
  height: 37px;
  padding: 9px 0 0 12px;
  background: #fdfdfd;
  line-height: 20px;
  white-space: nowrap;
}
.grid td:nth-child(n+3) {
  padding-left: 11px;
}
.grid tr:nth-child(even) td {
  height: 38px;
  background: #f3f3f3;
}
.grid .selected td {
  background: #d9e0f0;
}
.bars {
  float: right;
  width: 16px;
  height: 14px;
  margin-right: 3px;
}
.grid .state {
  padding: 5px 0 0 9px;
}
.state::before {
  content: "";
  display: inline-block;
  width: 20px;
  height: 20px;
  margin: -4px 1px 0 0;
  border-radius: 50%;
  background: #87cd17;
  vertical-align: middle;
}
.grid .ops {
  padding: 0 0 0 8px;
  vertical-align: bottom;
}
.ops div {
  display: flex;
  gap: 6px;
}
.ops button {
  display: flex;
  align-items: center;
  justify-content: center;
  width: 33px;
  height: 32px;
  border: 1px solid #c4cdd7;
  background: #eaeef3;
  color: #6c7986;
}
.ops button:disabled {
  border-color: #d8d8d8;
  background: rgba(255,255,255,0.6);
  color: #9ea6b1;
}
.files th:first-child, .files td:first-child {
  padding-left: 7px;
}
input[type="checkbox"] {
  display: block;
  appearance: none;
  width: 17px;
  height: 18px;
  border: 1px solid #ccc;
  background: #fcfcfc;
}
.files-area {
  position: relative;
}
.files-body {
  display: flex;
  align-items: flex-end;
  height: 172px;
  overflow: hidden;
}
.files-scroll {
  position: absolute;
  top: 0;
  right: 0;
  bottom: 0;
  width: 21px;
  padding: 9px 0 8px;
  border-bottom: 1px solid #ccc;
}
.files-scroll .thumb {
  height: 21px;
  margin: auto 0 7px;
}
.pager {
  display: flex;
  align-items: center;
  margin-top: 12px;
  padding: 0 21px 0 10px;
  gap: 4px;
}
.total {
  margin-right: auto;
}
.pager button {
  display: flex;
  align-items: center;
  justify-content: center;
  width: 28px;
  height: 28px;
  background: #abb9d0;
}
.size {
  display: flex;
  align-items: center;
}
.select {
  position: relative;
}
.select::after {
  content: "▼";
  position: absolute;
  right: 8px;
  top: 6px;
  font-size: 10px;
  pointer-events: none;
}
.pager select {
  appearance: none;
  display: block;
  width: 63px;
  height: 32px;
  padding: 0 6px;
  border: 1px solid #ccc;
  border-radius: 0;
  background: #fff;
  color: #333;
}
```
